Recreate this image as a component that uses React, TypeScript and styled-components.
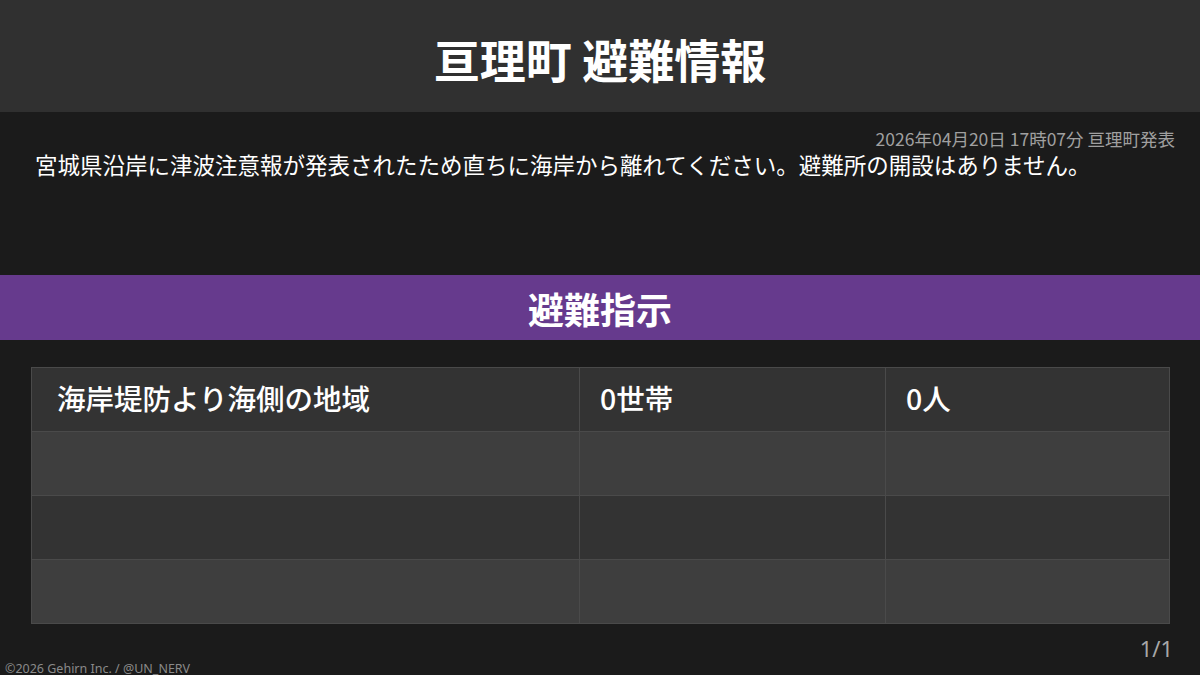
import React from "react";
import styled, { createGlobalStyle } from "styled-components";

const Global = createGlobalStyle`
  html, body { margin: 0; padding: 0; background: #1b1b1b; }
  body { font-family: "Noto Sans CJK JP", "Noto Sans", sans-serif; color: #fff; }
`;

const Page = styled.div`
  width: 1200px;
  height: 675px;
  display: flex;
  flex-direction: column;
  background: #1b1b1b;
  overflow: hidden;
`;

const Header = styled.header`
  height: 112px;
  flex: none;
  background: #303030;
  display: flex;
  align-items: center;
  justify-content: center;
`;

const Title = styled.h1`
  margin: 0;
  font-size: 46px;
  font-weight: 700;
  line-height: 1;
  color: #fff;
  padding-top: 4px;
`;

const Info = styled.section`
  height: 163px;
  flex: none;
  box-sizing: border-box;
  padding: 17px 25px 0 35px;
  display: flex;
  flex-direction: column;
`;

const Issued = styled.div`
  text-align: right;
  font-size: 17.5px;
  line-height: 20px;
  color: #a0a0a0;
`;

const Message = styled.p`
  margin: 0;
  font-size: 22.5px;
  line-height: 30px;
  color: #fff;
  white-space: nowrap;
`;

const Band = styled.div`
  height: 65px;
  flex: none;
  background: #663a8d;
  display: flex;
  align-items: center;
  justify-content: center;
  font-size: 36px;
  font-weight: 700;
  color: #fff;
`;

const TableWrap = styled.div`
  padding: 27px 31px 0 31px;
`;

const Table = styled.table`
  width: 1138px;
  border-collapse: collapse;
  table-layout: fixed;
`;

const Row = styled.tr<{ $alt: boolean }>`
  height: 64px;
  background: ${(p) => (p.$alt ? "#3e3e3e" : "#333333")};
`;

const Cell = styled.td<{ $pad: number }>`
  border: 1px solid #4a4a4a;
  padding: 0 0 4px ${(p) => p.$pad}px;
  font-size: 28.5px;
  font-weight: 500;
  color: #fff;
  vertical-align: middle;
`;

const Pager = styled.div`
  margin-top: 11px;
  padding-right: 27px;
  text-align: right;
  font-family: "Noto Sans", sans-serif;
  font-size: 22px;
  line-height: 26px;
  color: #a8a8a8;
`;

const Copyright = styled.div`
  margin-top: auto;
  padding: 0 0 3px 5px;
  font-family: "Noto Sans", sans-serif;
  font-size: 12.5px;
  line-height: 15px;
  color: #8a8a8a;
`;

const rows = [
  ["海岸堤防より海側の地域", "0世帯", "0人"],
  ["", "", ""],
  ["", "", ""],
  ["", "", ""],
];

const widths = [548, 306, 284];
const pads = [25, 20, 20];

export default function App() {
  return (
    <>
      <Global />
      <Page>
        <Header>
          <Title>亘理町 避難情報</Title>
        </Header>
        <Info>
          <Issued>2026年04月20日 17時07分 亘理町発表</Issued>
          <Message>
            宮城県沿岸に津波注意報が発表されたため直ちに海岸から離れてください。避難所の開設はありません。
          </Message>
        </Info>
        <Band>避難指示</Band>
        <TableWrap>
          <Table>
            <colgroup>
              {widths.map((w, i) => (
                <col key={i} style={{ width: w }} />
              ))}
            </colgroup>
            <tbody>
              {rows.map((r, i) => (
                <Row key={i} $alt={i % 2 === 1}>
                  {r.map((c, j) => (
                    <Cell key={j} $pad={pads[j]}>
                      {c}
                    </Cell>
                  ))}
                </Row>
              ))}
            </tbody>
          </Table>
        </TableWrap>
        <Pager>1/1</Pager>
        <Copyright>©2026 Gehirn Inc. / @UN_NERV</Copyright>
      </Page>
    </>
  );
}
